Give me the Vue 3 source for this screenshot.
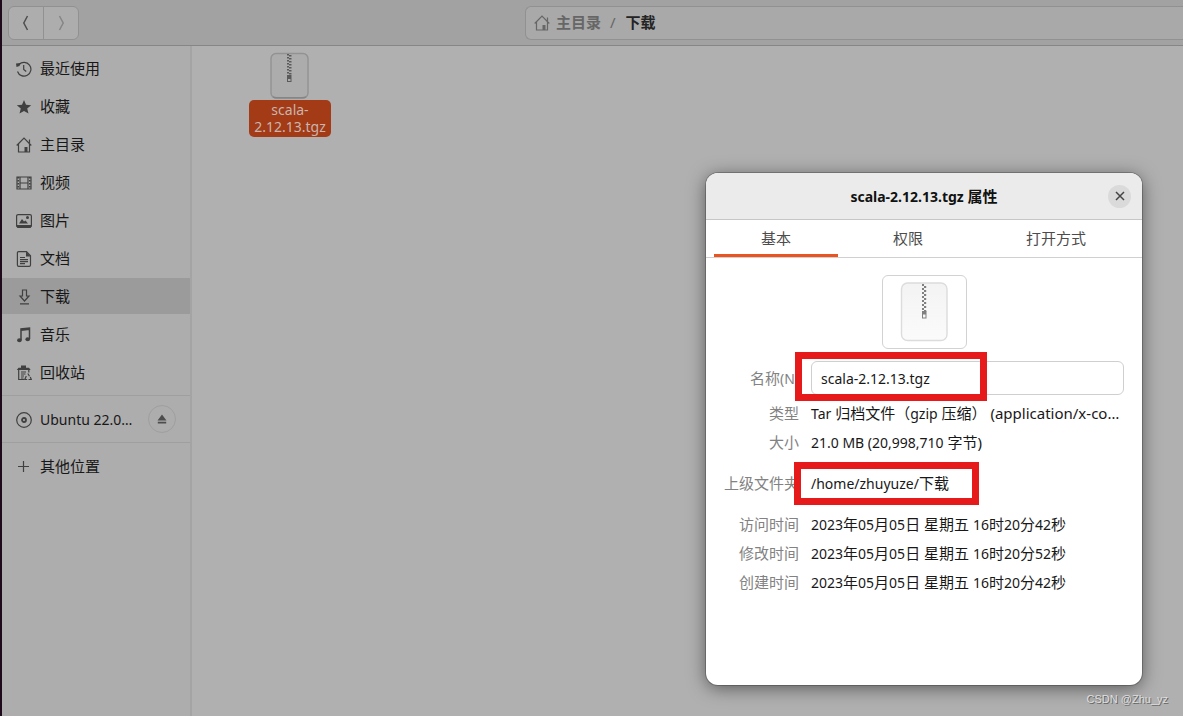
<script setup>
import { ref } from 'vue'

const places = [
  { icon: 'recent', label: '最近使用' },
  { icon: 'star', label: '收藏' },
  { icon: 'home', label: '主目录' },
  { icon: 'video', label: '视频' },
  { icon: 'picture', label: '图片' },
  { icon: 'document', label: '文档' },
  { icon: 'download', label: '下载' },
  { icon: 'music', label: '音乐' },
  { icon: 'trash', label: '回收站' },
]
const current = ref('下载')
const tabs = [
  { id: 'basic', label: '基本' },
  { id: 'perm', label: '权限' },
  { id: 'open', label: '打开方式' },
]
const activeTab = ref('basic')
const fileName = ref('scala-2.12.13.tgz')
const teeth = [0, 1, 2, 3, 4, 5, 6]
const times = [
  { label: '访问时间', value: '2023年05月05日 星期五 16时20分42秒' },
  { label: '修改时间', value: '2023年05月05日 星期五 16时20分52秒' },
  { label: '创建时间', value: '2023年05月05日 星期五 16时20分42秒' },
]
// Splits a date into runs of digits and runs of Chinese characters.
const runs = (text) => text.split(/([\d]+)/).filter(Boolean).map((s) => ({ s, latin: /\d/.test(s) }))
</script>

<template>
  <div class="files">
    <header class="bar">
      <div class="nav">
        <button type="button" aria-label="后退">
          <svg width="16" height="16" viewBox="0 0 16 16"><path d="M9.500 1 5.800 8l3.700 7" /></svg>
        </button>
        <button type="button" class="dim" aria-label="前进">
          <svg width="16" height="16" viewBox="0 0 16 16"><path d="M6.500 1l3.700 7-3.700 7" /></svg>
        </button>
      </div>
      <nav class="path">
        <a href="#home">
          <svg class="ic" width="16" height="16" viewBox="0 0 16 16"><path d="M.7 8.500 8 1.200l7.300 7.300M2.500 7v8h11V7M13.500 2.500V6" /><path class="fill" d="M8.500 10h3v5h-3z" /></svg>
          主目录
        </a>
        <span class="slash">/</span>
        <a href="#downloads" class="here">下载</a>
      </nav>
    </header>

    <div class="body">
      <aside class="side">
        <ul>
          <li v-for="p in places" :key="p.label">
            <button type="button" class="place" :class="{ on: current === p.label }" @click="current = p.label">
              <svg class="ic" width="16" height="16" viewBox="0 0 16 16">
                <template v-if="p.icon === 'recent'">
                  <path d="M3 3.500A6.900 6.900 0 1 1 1.500 10.500M7.700 4v4.500l2.500 2" /><path class="fill" d="M0 2.500 4.500 2 3.500 5 .5 6z" />
                </template>
                <path v-else-if="p.icon === 'star'" class="fill" d="M8 1l2 4.800 5.200.4-4 3.400 1.300 5L8 11.900l-4.500 2.700 1.300-5-4-3.400L6 5.800z" />
                <template v-else-if="p.icon === 'home'">
                  <path d="M.7 8.500 8 1.200l7.300 7.300M2.500 7v8h11V7M13.500 2.500V6" /><path class="fill" d="M8.500 10h3v5h-3z" />
                </template>
                <template v-else-if="p.icon === 'video'">
                  <path d="M1 2h14v12H1zM4 2v12M12 2v12M4 8h8" /><path d="M2.200 2v12M13.800 2v12" stroke-dasharray="1.500 1.500" stroke-width="1.600" />
                </template>
                <template v-else-if="p.icon === 'picture'">
                  <rect x=".6" y="1.600" width="14.800" height="12.400" rx="1.500" /><path class="fill" d="M.5 12h15v1.500L14.500 15h-13l-1-1.500zM3 10.500 6 6l2 2.500 1.500-1 2.500 3z" /><circle class="fill" cx="11.500" cy="4.600" r="1.500" />
                </template>
                <template v-else-if="p.icon === 'document'">
                  <path d="M2.700.7h7.800l4 4v9.300q0 1.300-1.300 1.300H2.700q-1.300 0-1.300-1.300V2Q1.400.7 2.700.7zM4 6.500h5M4 8.700h8M4 10.700h8M4 12.700h5" /><path class="fill" d="M10 .5 14.800 5.500H10z" />
                </template>
                <path v-else-if="p.icon === 'download'" d="M6.500 1h4v6H13l-4.500 5L4 7h2.500zM4 14.800h9" />
                <template v-else-if="p.icon === 'music'">
                  <path d="M5 13V2l8.500-1v11M5 3.200l8.500-1" stroke-width="1.500" /><ellipse class="fill" cx="3.400" cy="13.200" rx="2.300" ry="2" /><ellipse class="fill" cx="11.700" cy="12.300" rx="2.300" ry="2" />
                </template>
                <template v-else>
                  <path class="fill" d="M.8 5 2.500 2.700H5V.5h5v2.200h3L14.700 5z" /><path d="M2.700 5v9.500H8M12.800 5v2.500M5 7h5M5 9h4.500M5 11h3M5 13h2.500" /><path d="M11.800 8.500l1.700 2.700M10.300 11l-1.500 3.500h2.400M14.300 12l1 2.500H12.500" />
                </template>
              </svg>
              {{ p.label }}
            </button>
          </li>
        </ul>
        <div class="group device">
          <button type="button" class="place">
            <svg class="ic" width="16" height="16" viewBox="0 0 16 16"><circle cx="8" cy="8" r="7.300" /><circle cx="8" cy="8" r="2" stroke-width="1.800" /></svg>
            <span class="lat">Ubuntu 22.0…</span>
          </button>
          <button type="button" class="eject" aria-label="弹出">
            <svg class="ic" width="10" height="10" viewBox="0 0 10 10"><path class="fill" d="M5 .5 9.500 6.500H.5zM.8 7.800h8.400v1.700H.8z" /></svg>
          </button>
        </div>
        <div class="group">
          <button type="button" class="place">
            <svg class="ic" width="16" height="16" viewBox="0 0 16 16"><path d="M7.500 2v11M2 7.500h11" /></svg>
            其他位置
          </button>
        </div>
      </aside>

      <main class="content">
        <button type="button" class="file">
          <svg width="40" height="48" viewBox="0 0 40 48">
            <rect x="1" y="1.500" width="37" height="44.500" rx="5" fill="#acacac" stroke="#929292" stroke-width="1.400" />
            <path d="M3 44.800q1 1 4 1h25q3 0 4-1" fill="none" stroke="#858585" />
            <g fill="#5a5a5a">
              <g v-for="n in teeth" :key="n"><rect x="17" :y="2 + n * 3" width="2" height="1.500" /><rect x="19" :y="3 + n * 3" width="2.500" height="1.500" /></g>
              <path fill-rule="evenodd" d="M17 23h4.500v7H17zm1 4v2h2.500v-2z" />
            </g>
          </svg>
          <span>scala-<br>2.12.13.tgz</span>
        </button>
      </main>
    </div>

    <section class="dialog" role="dialog" aria-labelledby="dlg-title">
      <header class="title">
        <h1 id="dlg-title"><span class="lat">scala-2.12.13.tgz</span> 属性</h1>
        <button type="button" class="close" aria-label="关闭">
          <svg width="10" height="10" viewBox="0 0 10 10"><path d="M1 1l8 8M9 1 1 9" /></svg>
        </button>
      </header>
      <div class="tabs" role="tablist">
        <button v-for="t in tabs" :key="t.id" type="button" role="tab" :class="[t.id, { active: activeTab === t.id }]" :aria-selected="activeTab === t.id" @click="activeTab = t.id">{{ t.label }}</button>
      </div>
      <div class="pane">
        <button type="button" class="thumb" aria-label="图标">
          <svg width="48" height="60" viewBox="0 0 48 60">
            <defs><linearGradient id="paper" x2="0" y2="1"><stop offset="0" stop-color="#f3f3f3" /><stop offset="1" stop-color="#fbfbfb" /></linearGradient></defs>
            <rect x="1.500" y="1" width="45.500" height="57.500" rx="6" fill="url(#paper)" stroke="#dcdcdc" stroke-width="1.400" />
            <g fill="#808080">
              <g v-for="n in teeth" :key="n"><rect x="22" :y="2 + n * 4" width="2" height="2" /><rect x="24" :y="4 + n * 4" width="2.200" height="2" /></g>
              <path fill-rule="evenodd" d="M22 29h4.500v7.500H22zm1 3.500v3h2.500v-3z" />
            </g>
          </svg>
        </button>
        <div class="rows">
          <label class="key" for="file-name">名称<span class="lat">(N)</span></label>
          <div class="mark name"><input id="file-name" v-model="fileName" type="text"></div>
          <span class="key">类型</span>
          <span class="val"><span class="lat">Tar</span> 归档文件（<span class="lat">gzip</span> 压缩） (application/x-co…</span>
          <span class="key">大小</span>
          <span class="val"><span class="lat">21.0 MB (20,998,710</span> 字节)</span>
          <span class="key parent">上级文件夹</span>
          <span class="val mark parent"><span class="lat">/home/zhuyuze/</span>下载</span>
          <template v-for="t in times" :key="t.label">
            <span class="key">{{ t.label }}</span>
            <span class="val"><span v-for="(r, i) in runs(t.value)" :key="i" :class="{ lat: r.latin }">{{ r.s }}</span></span>
          </template>
        </div>
      </div>
    </section>
    <div class="credit">CSDN @Zhu_yz</div>
  </div>
</template>

<style>
body { margin: 0; }
</style>

<style scoped>
*, *::after { box-sizing: border-box; }
.files {
  position: relative;
  display: flex;
  flex-direction: column;
  min-height: 100vh;
  overflow: hidden;
  border-left: 2px solid #1f0a1c;
  background: #b0b0b0;
  color: #181818;
  font: 15px/21px "Noto Sans", "Noto Sans CJK SC", sans-serif;
}
button, input { font: inherit; color: inherit; border: 0; padding: 0; margin: 0; background: none; }
svg { display: block; flex: none; fill: none; stroke: currentColor; stroke-width: 1.5; }
.ic { stroke-width: 1.2; }
.fill { fill: currentColor; stroke: none; }
svg g, .thumb svg, .file svg { stroke: none; }
.lat { font-size: 14px; }

.bar {
  display: grid;
  grid-template-columns: 523px 1fr;
  align-items: center;
  height: 46px;
  background: #a2a2a2;
  border-bottom: 1px solid #868686;
}
.nav {
  display: flex;
  justify-self: start;
  height: 34px;
  margin-left: 6px;
  border: 1px solid #919191;
  border-radius: 6px;
  background: #adadad;
  color: #4e4e4e;
}
.nav button { width: 34px; display: grid; place-items: center; }
.nav .dim { width: 35px; border-left: 1px solid #919191; color: #858585; }
.path {
  display: flex;
  align-items: center;
  height: 34px;
  padding-left: 8px;
  border: 1px solid #919191;
  border-right: 0;
  border-radius: 6px 0 0 6px;
  background: #a9a9a9;
  color: #666;
  font-weight: 700;
}
.path a { display: flex; gap: 6px; color: inherit; text-decoration: none; }
.path a svg { margin-top: 3px; }
.path .slash { margin: 0 10px 0 9px; font-weight: 400; }
.path .here { color: #242424; }

.body { display: flex; flex: 1; }
.side { width: 190px; border-right: 2px solid #a4a4a4; background: #adadad; }
ul { list-style: none; margin: 0; padding: 4px 0 5px; display: grid; gap: 2px; }
.place {
  display: flex;
  align-items: center;
  gap: 8px;
  width: 100%;
  height: 36px;
  padding: 1px 0 0 14px;
  text-align: left;
  white-space: nowrap;
}
.place svg { color: #404040; }
.place.on { background: #9b9b9b; }
.group { border-top: 1px solid #9f9f9f; padding: 5px 0; }
.device { display: flex; align-items: center; padding-right: 14px; }
.eject {
  display: grid;
  place-items: center;
  flex: none;
  width: 28px;
  height: 28px;
  border: 1px solid #9f9f9f;
  border-radius: 50%;
}
.eject svg { color: #4d4d4d; }
.content { flex: 1; padding: 6px 57px; }
.file {
  display: flex;
  flex-direction: column;
  align-items: center;
  width: 82px;
  font-size: 14px;
  line-height: 17px;
}
.file span {
  width: 100%;
  padding: 1px 0 2px;
  border-radius: 5px;
  background: #a33b17;
  color: #c9b5ae;
}

.dialog {
  position: absolute;
  right: 41px;
  bottom: 31px;
  width: 436px;
  min-height: 512px;
  border-radius: 12px;
  background: #fff;
  box-shadow: 0 0 0 1px rgba(0, 0, 0, .22), 0 3px 18px rgba(0, 0, 0, .5);
}
.title {
  display: grid;
  grid-template-columns: 1fr auto 1fr;
  align-items: center;
  height: 47px;
  padding: 0 11px;
  border-radius: 12px 12px 0 0;
  border-bottom: 1px solid #c6c6c6;
  background: #ebebeb;
}
h1 { grid-column: 2; margin: 0; padding-top: 1px; font-size: 15px; line-height: 21px; color: #111; }
.close {
  display: grid;
  place-items: center;
  justify-self: end;
  width: 23px;
  height: 23px;
  border-radius: 50%;
  background: #dadada;
  color: #444;
}
.tabs { display: flex; height: 38px; padding: 0 8px; border-bottom: 1px solid #d0d0d0; color: #4c4c4c; }
.tabs button { border-bottom: 3px solid transparent; padding-top: 3px; }
.tabs .basic { flex: 124; }
.tabs .perm { flex: 140; }
.tabs .open { flex: 156; }
.tabs .active { border-color: #e95420; }
.pane { padding: 17px 18px 18px; }
.thumb {
  display: grid;
  place-items: center;
  width: 85px;
  height: 74px;
  margin: 0 auto 12px;
  border: 1px solid #d2d2d2;
  border-radius: 6px;
}
.rows { display: grid; grid-template-columns: 75px 1fr; column-gap: 12px; row-gap: 8px; align-items: center; }
.key { text-align: right; color: #828282; white-space: nowrap; }
.val { white-space: nowrap; min-width: 0; }
.parent { margin: 12px 0; }
.mark { position: relative; }
.mark::after { content: ""; position: absolute; border: 7px solid #e61a1a; pointer-events: none; }
.mark.name::after { left: -16px; top: -9px; width: 192px; height: 49px; }
.mark.parent::after { left: -17px; top: -11px; width: 185px; height: 43px; }
.mark input {
  display: block;
  width: 100%;
  height: 34px;
  padding: 0 9px;
  border: 1px solid #cfcfcf;
  border-radius: 6px;
  font-size: 14px;
}
.credit {
  position: absolute;
  right: 15px;
  bottom: 10px;
  font: 11px/14px "Liberation Sans", sans-serif;
  color: #dedede;
  text-shadow: 1px 1px 0 #666;
}
</style>
